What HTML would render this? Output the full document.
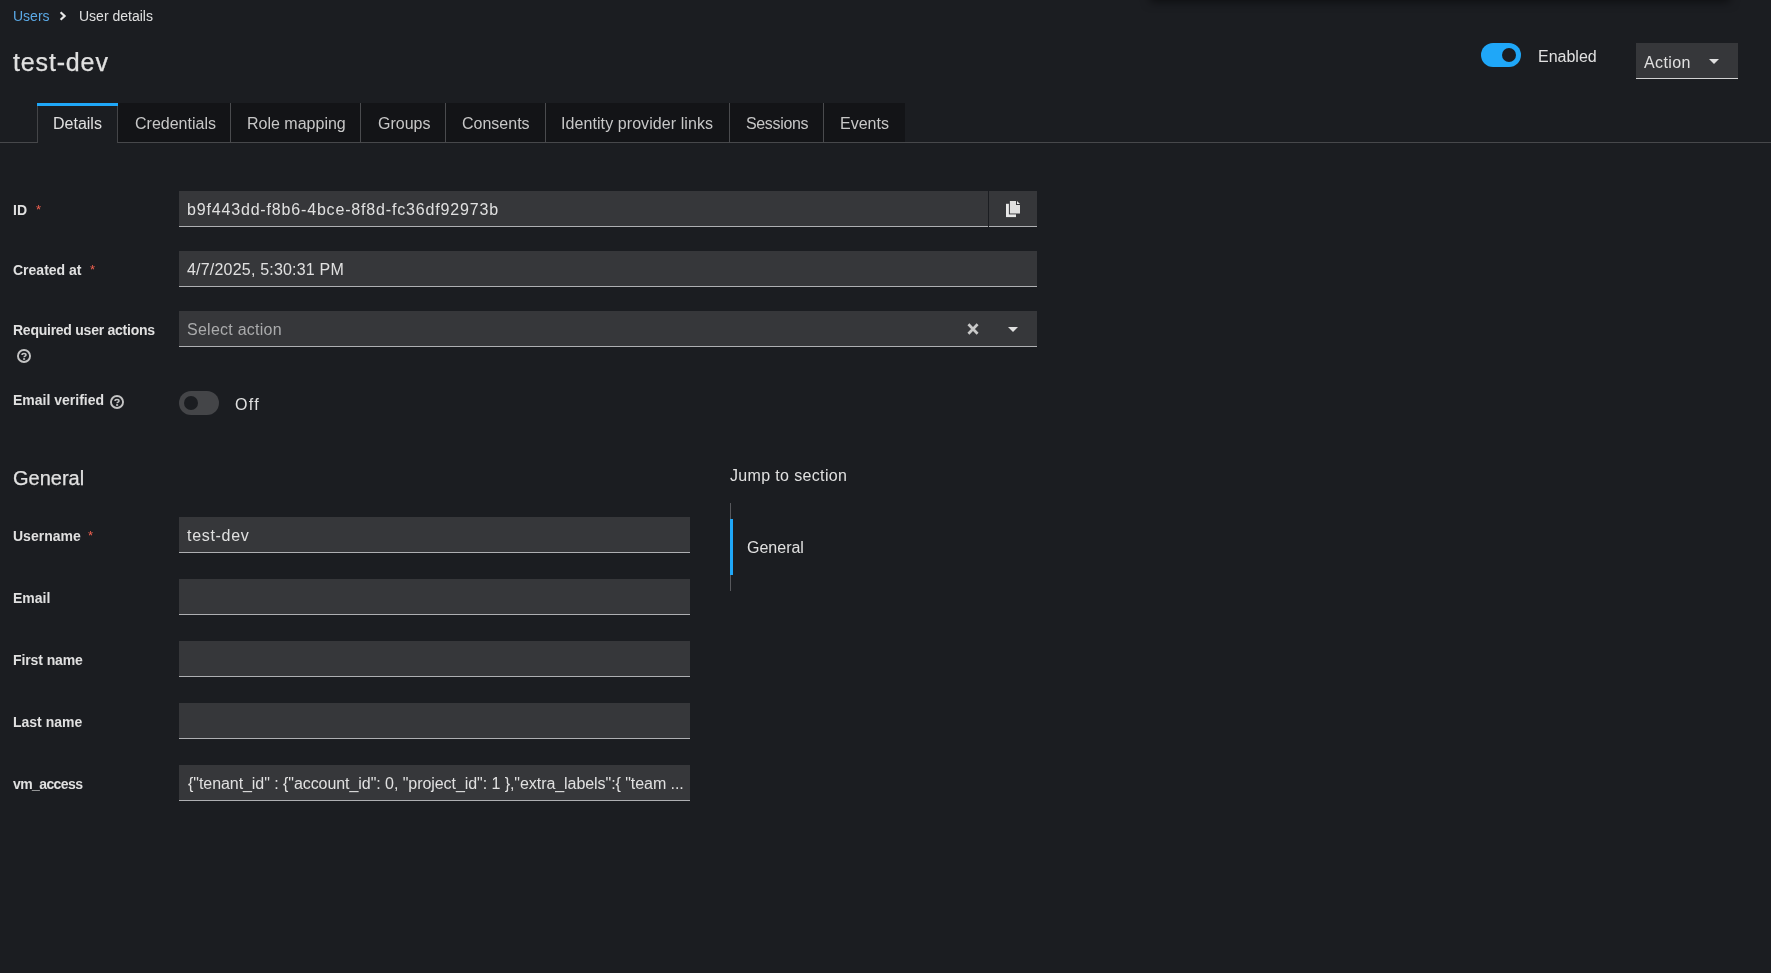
<!DOCTYPE html>
<html>
<head>
<meta charset="utf-8">
<style>
html,body{margin:0;padding:0;}
body{width:1771px;height:973px;overflow:hidden;background:#1b1d21;position:relative;font-family:"Liberation Sans",sans-serif;color:#e0e0e0;}
.a{position:absolute;}
.t{position:absolute;white-space:nowrap;line-height:1;}
.s14{font-size:14px;}
.s16{font-size:16px;}
.b{font-weight:bold;}
.req{color:#f0604f;font-size:13px;}
.inp{position:absolute;background:#36373a;border-bottom:1px solid #aeafb2;box-sizing:border-box;height:36px;}
.tab{position:absolute;top:103px;height:40px;background:#131417;box-sizing:border-box;border-right:1px solid #4a4b4e;border-bottom:1px solid #47484b;}
.tabt{position:absolute;white-space:nowrap;line-height:1;font-size:16px;color:#c7c7c7;}
.lbl{position:absolute;white-space:nowrap;line-height:1;font-size:14px;font-weight:bold;color:#e0e0e0;}
.val{position:absolute;white-space:nowrap;line-height:1;font-size:16px;color:#e0e0e0;}
.t,.tabt,.lbl,.val{will-change:transform;}
</style>
</head>
<body>
<!-- top shadow -->
<div class="a" style="left:1150px;top:-30px;width:580px;height:30px;box-shadow:0 2px 10px rgba(0,0,0,0.5);background:#1b1d21;"></div>

<!-- breadcrumb -->
<div class="t s14" id="bc1" style="left:13px;top:9px;color:#5aa9e6;">Users</div>
<svg class="a" style="left:59px;top:11px;" width="8" height="10" viewBox="0 0 8 10"><path d="M1.6 1.2 L5.6 5 L1.6 8.8" fill="none" stroke="#e8e8e8" stroke-width="2.2"/></svg>
<div class="t s14" id="bc2" style="left:79px;top:9px;">User details</div>

<!-- title -->
<div class="t" id="title" style="left:13px;top:50px;font-size:25px;letter-spacing:0.85px;-webkit-text-stroke:0.25px #e0e0e0;">test-dev</div>

<!-- enabled toggle -->
<div class="a" style="left:1481px;top:43px;width:40px;height:24px;border-radius:12px;background:#1fa7f8;"></div>
<div class="a" style="left:1502px;top:48px;width:14px;height:14px;border-radius:7px;background:#1b1d21;"></div>
<div class="t s16" id="enabled" style="left:1538px;top:49px;">Enabled</div>

<!-- action button -->
<div class="a" style="left:1636px;top:43px;width:102px;height:36px;background:#36373a;border-bottom:1px solid #d2d2d2;box-sizing:border-box;"></div>
<div class="t s16" id="action" style="left:1644px;top:55px;letter-spacing:0.4px;">Action</div>
<svg class="a" style="left:1709px;top:59px;" width="10" height="5" viewBox="0 0 10 5"><path d="M0 0 L10 0 L5 5 Z" fill="#e0e0e0"/></svg>

<!-- tabs -->
<div class="a" style="left:0;top:142px;width:1771px;height:1px;background:#47484b;"></div>
<div class="a" style="left:37px;top:103px;width:81px;height:40px;background:#1b1d21;border-left:1px solid #444548;border-right:1px solid #444548;box-sizing:border-box;"></div>
<div class="a" style="left:37px;top:103px;width:81px;height:3px;background:#1fa7f8;"></div>
<div class="tabt" id="tab0" style="left:53px;top:116px;color:#e0e0e0;">Details</div>
<div class="tab" style="left:118px;width:113px;"></div>
<div class="tabt" id="tab1" style="left:135px;top:116px;">Credentials</div>
<div class="tab" style="left:231px;width:130px;"></div>
<div class="tabt" id="tab2" style="left:247px;top:116px;">Role mapping</div>
<div class="tab" style="left:361px;width:85px;"></div>
<div class="tabt" id="tab3" style="left:378px;top:116px;">Groups</div>
<div class="tab" style="left:446px;width:100px;"></div>
<div class="tabt" id="tab4" style="left:462px;top:116px;">Consents</div>
<div class="tab" style="left:546px;width:184px;"></div>
<div class="tabt" id="tab5" style="left:561px;letter-spacing:0.08px;top:116px;">Identity provider links</div>
<div class="tab" style="left:730px;width:94px;"></div>
<div class="tabt" id="tab6" style="left:746px;letter-spacing:-0.35px;top:116px;">Sessions</div>
<div class="tab" style="left:824px;width:81px;border-right:none;"></div>
<div class="tabt" id="tab7" style="left:840px;top:116px;">Events</div>

<!-- ID -->
<div class="lbl" id="l_id" style="left:13px;top:203px;">ID</div>
<div class="t req" style="left:36px;top:203px;">*</div>
<div class="inp" style="left:179px;top:191px;width:809px;"></div>
<div class="val" id="v_id" style="left:187px;top:202px;letter-spacing:0.83px;">b9f443dd-f8b6-4bce-8f8d-fc36df92973b</div>
<div class="inp" style="left:989px;top:191px;width:48px;"></div>
<svg class="a" style="left:1000px;top:196px;" width="26" height="26" viewBox="0 0 26 26">
  <path d="M6 7.8 H16 V21.1 H6 Z" fill="#e8e8e8"/>
  <path d="M8.9 4 H21 V18.4 H8.9 Z" fill="#36373a"/>
  <path d="M9.9 4.9 H16 V9.1 H20 V17.6 H9.9 Z" fill="#e0e0e0"/>
  <path d="M17 5 L20 8 H17 Z" fill="#e8e8e8"/>
</svg>

<!-- Created at -->
<div class="lbl" id="l_created" style="left:13px;top:263px;">Created at</div>
<div class="t req" style="left:90px;top:263px;">*</div>
<div class="inp" style="left:179px;top:251px;width:858px;"></div>
<div class="val" id="v_created" style="left:187px;top:262px;letter-spacing:0.2px;">4/7/2025, 5:30:31 PM</div>

<!-- Required user actions -->
<div class="lbl" id="l_req" style="left:13px;top:323px;letter-spacing:-0.25px;">Required user actions</div>
<svg class="a" style="left:17px;top:349px;" width="14" height="14" viewBox="0 0 14 14"><circle cx="7" cy="7" r="6.05" fill="none" stroke="#c4c4c4" stroke-width="1.9"/><path d="M5.0 6.0 C5.0 4.9 5.9 4.5 7.0 4.5 C8.2 4.5 9.0 5.1 9.0 6.0 C9.0 7.1 7.1 7.2 7.1 8.3" fill="none" stroke="#c4c4c4" stroke-width="1.5"/><rect x="6.1" y="9.2" width="2.0" height="1.6" fill="#c4c4c4"/></svg>
<div class="inp" style="left:179px;top:311px;width:858px;"></div>
<div class="val" id="v_sel" style="left:187px;top:322px;letter-spacing:0.25px;color:#aaabac;">Select action</div>
<svg class="a" style="left:967px;top:323px;" width="12" height="12" viewBox="0 0 12 12"><path d="M1.4 1.3 L10.6 10.7 M10.6 1.3 L1.4 10.7" stroke="#c9c9c9" stroke-width="2.7"/></svg>
<svg class="a" style="left:1008px;top:327px;" width="10" height="5" viewBox="0 0 10 5"><path d="M0 0 L10 0 L5 5 Z" fill="#e0e0e0"/></svg>

<!-- Email verified -->
<div class="lbl" id="l_ev" style="left:13px;top:393px;">Email verified</div>
<svg class="a" style="left:110px;top:394.75px;" width="14" height="14" viewBox="0 0 14 14"><circle cx="7" cy="7" r="6.05" fill="none" stroke="#c4c4c4" stroke-width="1.9"/><path d="M5.0 6.0 C5.0 4.9 5.9 4.5 7.0 4.5 C8.2 4.5 9.0 5.1 9.0 6.0 C9.0 7.1 7.1 7.2 7.1 8.3" fill="none" stroke="#c4c4c4" stroke-width="1.5"/><rect x="6.1" y="9.2" width="2.0" height="1.6" fill="#c4c4c4"/></svg>
<div class="a" style="left:179px;top:391px;width:40px;height:24px;border-radius:12px;background:#444548;"></div>
<div class="a" style="left:184px;top:396px;width:14px;height:14px;border-radius:7px;background:#1b1d21;"></div>
<div class="val" id="v_off" style="left:235px;top:397px;letter-spacing:1.3px;">Off</div>

<!-- General -->
<div class="t" id="general" style="left:13px;top:468px;font-size:20px;-webkit-text-stroke:0.25px #e0e0e0;">General</div>

<div class="lbl" id="l_user" style="left:13px;top:529px;">Username</div>
<div class="t req" style="left:88px;top:529px;">*</div>
<div class="inp" style="left:179px;top:517px;width:511px;"></div>
<div class="val" id="v_user" style="left:187px;top:528px;letter-spacing:0.7px;">test-dev</div>

<div class="lbl" id="l_email" style="left:13px;top:591px;">Email</div>
<div class="inp" style="left:179px;top:579px;width:511px;"></div>

<div class="lbl" id="l_first" style="left:13px;top:653px;letter-spacing:-0.1px;">First name</div>
<div class="inp" style="left:179px;top:641px;width:511px;"></div>

<div class="lbl" id="l_last" style="left:13px;top:715px;">Last name</div>
<div class="inp" style="left:179px;top:703px;width:511px;"></div>

<div class="lbl" id="l_vm" style="left:13px;top:777px;letter-spacing:-0.6px;">vm_access</div>
<div class="inp" style="left:179px;top:765px;width:511px;"></div>
<div class="val" id="v_vm" style="left:188px;top:776px;letter-spacing:-0.06px;">{"tenant_id" : {"account_id": 0, "project_id": 1 },"extra_labels":{ "team ...</div>

<!-- jump to section -->
<div class="t s16" id="jump" style="left:730px;top:468px;letter-spacing:0.35px;">Jump to section</div>
<div class="a" style="left:730px;top:503px;width:1px;height:88px;background:#57585c;"></div>
<div class="a" style="left:730px;top:519px;width:3px;height:56px;background:#1fa7f8;"></div>
<div class="t s16" id="jgen" style="left:747px;top:540px;">General</div>

</body>
</html>
